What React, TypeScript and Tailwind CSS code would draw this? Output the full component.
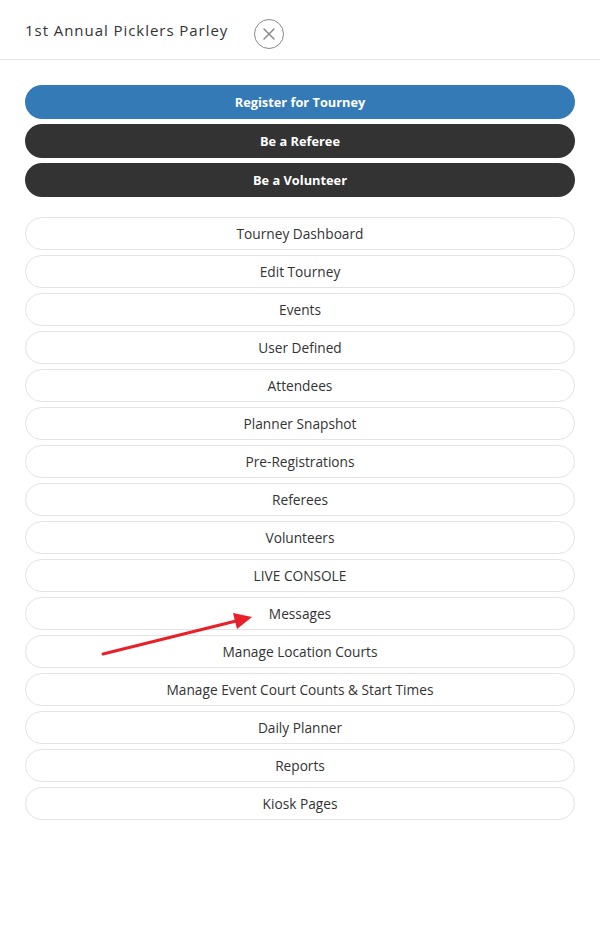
import React from "react";

const items = [
  "Tourney Dashboard",
  "Edit Tourney",
  "Events",
  "User Defined",
  "Attendees",
  "Planner Snapshot",
  "Pre-Registrations",
  "Referees",
  "Volunteers",
  "LIVE CONSOLE",
  "Messages",
  "Manage Location Courts",
  "Manage Event Court Counts & Start Times",
  "Daily Planner",
  "Reports",
  "Kiosk Pages",
];

export default function App() {
  return (
    <div
      className="relative w-[600px] h-[937px] bg-white text-[#333]"
      style={{ fontFamily: '"Open Sans", "Noto Sans", sans-serif' }}
    >
      <div className="h-[60px] border-b border-[#e5e5e5] flex items-center pl-[25px]">
        <span className="text-[15px] tracking-[0.95px] text-[#333] mt-[2px]">1st Annual Picklers Parley</span>
        <button className="ml-[26px] mt-[8px] w-[30px] h-[30px] rounded-full border-[1.5px] border-[#8a8a8a] flex items-center justify-center">
          <svg width="14" height="14" viewBox="0 0 14 14">
            <path d="M2 2 L12 12 M12 2 L2 12" stroke="#8a8a8a" strokeWidth="1.5" strokeLinecap="round" />
          </svg>
        </button>
      </div>
      <div className="px-[25px] pt-[25px]">
        <div className="flex flex-col gap-[5px]">
          <div className="h-[34px] pt-[2px] rounded-full bg-[#337ab7] text-white font-bold text-[12.8px] flex items-center justify-center">
            Register for Tourney
          </div>
          <div className="h-[34px] pt-[2px] rounded-full bg-[#333333] text-white font-bold text-[12.8px] flex items-center justify-center">
            Be a Referee
          </div>
          <div className="h-[34px] pt-[2px] rounded-full bg-[#333333] text-white font-bold text-[12.8px] flex items-center justify-center">
            Be a Volunteer
          </div>
        </div>
        <div className="mt-[20px] flex flex-col gap-[5px]">
          {items.map((t) => (
            <div
              key={t}
              className="h-[33px] pt-[2px] rounded-full border border-[#e3e3e3] bg-white text-[13.7px] text-[#333] flex items-center justify-center"
            >
              {t}
            </div>
          ))}
        </div>
      </div>
      <svg className="absolute left-0 top-0 pointer-events-none" width="600" height="937">
        <line x1="103" y1="654" x2="240" y2="620" stroke="#e8202a" strokeWidth="3" strokeLinecap="round" />
        <polygon points="252,617 233,613 237,629" fill="#e8202a" />
      </svg>
    </div>
  );
}
